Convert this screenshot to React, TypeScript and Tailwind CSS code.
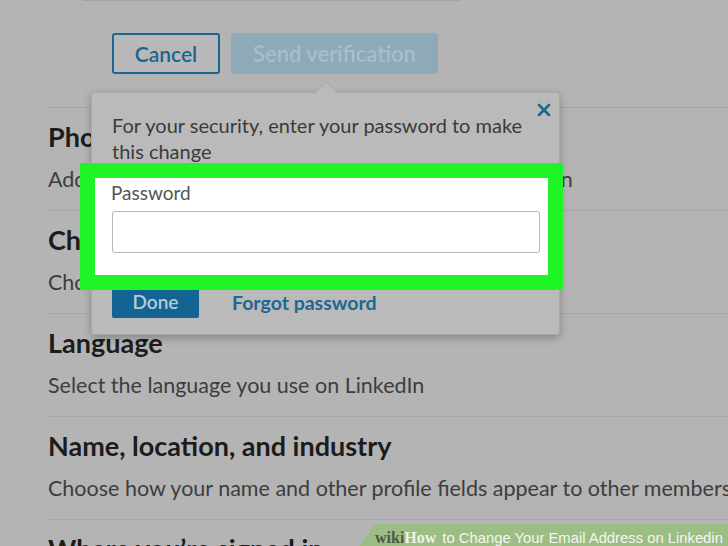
import React from "react";

const sections = [
  { title: "Phone numbers", sub: "Add a phone number in case you have trouble signing in" },
  { title: "Change password", sub: "Choose a unique password to protect your account" },
  { title: "Language", sub: "Select the language you use on LinkedIn" },
  { title: "Name, location, and industry", sub: "Choose how your name and other profile fields appear to other members" },
  { title: "Where you\u2019re signed in", sub: "See your active sessions, and sign out if you\u2019d like" },
];

export default function App() {
  return (
    <div
      className="relative w-[728px] h-[546px] overflow-hidden bg-[#b4b4b4]"
      style={{ fontFamily: "Lato, 'Open Sans', sans-serif" }}
    >
      {/* page content */}
      <div className="flex flex-col">
        <div className="ml-[82px] w-[378px] h-px bg-[#a3a3a3]" />
        <div className="flex gap-[11px] ml-[112px] mt-[32px]">
          <div className="w-[108px] h-[41px] rounded-[3px] border-2 border-[#1b6690] bg-[#b8b8b8] flex items-center justify-center text-[21px] font-semibold text-[#1b6690]">
            Cancel
          </div>
          <div className="w-[207px] h-[41px] rounded-[3px] bg-[#8eaab9] flex items-center justify-center text-[22px] font-semibold text-[#a6bfcc]">
            Send verification
          </div>
        </div>
        <div className="flex flex-col ml-[48px] mt-[33px]">
          {sections.map((s) => (
            <div key={s.title} className="border-t border-[#a6a6a6] h-[103px] pt-[13px] whitespace-nowrap">
              <div className="text-[27px] leading-[32px] font-bold text-[#1c1c1c]">{s.title}</div>
              <div className="mt-[12px] text-[21.5px] leading-[28px] text-[#3d3d3d]">{s.sub}</div>
            </div>
          ))}
        </div>
      </div>

      {/* popover */}
      <div className="absolute left-[91px] top-[92px] w-[469px] h-[243px] bg-[#bababa] rounded-[3px] border border-[#a9a9a9] shadow-[0_3px_8px_rgba(0,0,0,0.25)]">
        <div className="absolute left-[226px] -top-[9px] w-[16px] h-[16px] rotate-45 bg-[#bababa] border-l border-t border-[#a9a9a9]" />
        <div className="absolute right-[8px] top-[6px]">
          <svg width="14" height="14" viewBox="0 0 14 14" className="mt-[4px]">
            <path d="M2 2 L12 12 M12 2 L2 12" stroke="#1b6690" strokeWidth="2.6" strokeLinecap="round" />
          </svg>
        </div>
        <div className="pl-[20px] pt-[19px] pr-[22px] text-[20px] leading-[26px] text-[#3a3a3a]">
          For your security, enter your password to make this change
        </div>
        <div className="flex items-center gap-[33px] pl-[20px] mt-[123px]">
          <div className="w-[87px] h-[31px] rounded-[2px] bg-[#146493] flex items-center justify-center text-[19px] font-semibold text-[#b4cbd8]">
            Done
          </div>
          <div className="text-[19.5px] font-bold text-[#1d6891]">Forgot password</div>
        </div>
      </div>

      {/* highlight annotation */}
      <div className="absolute left-[80px] top-[163px] w-[483px] h-[127px] border-[15px] border-[#1ff526] bg-white">
        <div className="pl-[16px] pt-[2px] text-[19px] leading-[26px] text-[#555555]">Password</div>
        <div className="ml-[17px] mt-[5px] w-[428px] h-[42px] rounded-[3px] border border-[#b9b9b9] bg-white" />
      </div>

      {/* wikiHow banner */}
      <div className="absolute left-[358px] top-[524px] w-[380px] h-[24px]">
        <div className="absolute inset-0 bg-[#9cbd84] rounded-tl-[4px] [clip-path:polygon(17px_0,100%_0,100%_100%,0_100%)]" />
        <div className="relative flex items-baseline pl-[17px] pt-[2px] whitespace-nowrap">
          <span className="text-[16px] font-bold text-[#4c5a45]" style={{ fontFamily: "'Liberation Serif', serif" }}>wiki</span>
          <span className="text-[16px] font-bold text-[#eef3ea]" style={{ fontFamily: "'Liberation Serif', serif" }}>How</span>
          <span className="ml-[6px] text-[14.8px] text-[#f4f7f1]" style={{ fontFamily: "'Liberation Sans', Arial, sans-serif" }}>
            to Change Your Email Address on Linkedin
          </span>
        </div>
      </div>
    </div>
  );
}
